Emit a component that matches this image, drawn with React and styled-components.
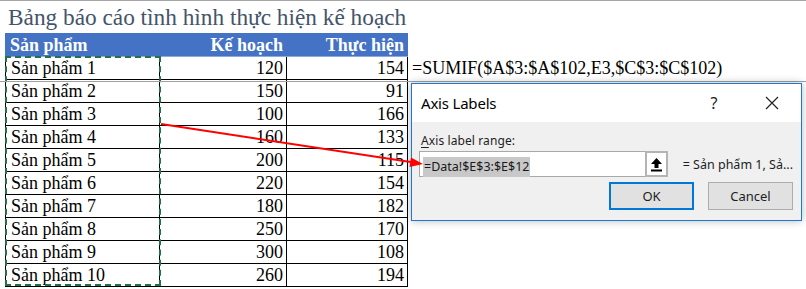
import React from 'react';
import styled, { createGlobalStyle } from 'styled-components';

const GlobalStyle = createGlobalStyle`
  html, body {
    margin: 0;
    padding: 0;
    background: #ffffff;
  }
  * {
    box-sizing: border-box;
  }
`;

const Page = styled.div`
  position: relative;
  width: 806px;
  height: 289px;
  overflow: hidden;
  border-top: 1px solid #a6a6a6;
  background: #ffffff;
  font-family: "Liberation Serif", "Times New Roman", serif;
`;

const Title = styled.div`
  height: 32px;
  padding-left: 8px;
  font-size: 23.3px;
  line-height: 32px;
  color: #44546a;
  white-space: nowrap;
`;

const Sheet = styled.div`
  margin-left: 5px;
`;

const Grid = styled.div`
  display: grid;
  grid-template-columns: 155px 127px 121px auto;
`;

const HeadCell = styled.div`
  height: 24px;
  padding: 0 ${p => (p.$right ? '4px' : '5px')};
  background: #4472c4;
  border-bottom: 1px solid #8ea9db;
  color: #ffffff;
  font-weight: bold;
  font-size: 18px;
  line-height: 24px;
  text-align: ${p => (p.$right ? 'right' : 'left')};
  white-space: nowrap;
`;

const Body = styled.div`
  position: relative;
`;

const Cell = styled.div`
  height: 23px;
  padding: 0 ${p => (p.$right ? '3px' : '5px')};
  border-bottom: 1px solid #000000;
  border-right: 1px solid #000000;
  border-left: ${p => (p.$first ? '1px solid #000000' : 'none')};
  font-size: 18px;
  line-height: 23px;
  color: #000000;
  text-align: ${p => (p.$right ? 'right' : 'left')};
  white-space: nowrap;
`;

const Overflow = styled.div`
  height: 23px;
  padding-left: 4px;
  font-size: 18px;
  line-height: 23px;
  color: #000000;
  white-space: nowrap;
`;

const Marquee = styled.div`
  position: absolute;
  left: 0;
  top: -1px;
  width: 156px;
  bottom: 1px;
  border: 2px dashed #217346;
  pointer-events: none;
`;

const RowRule = styled.div`
  position: absolute;
  left: 0;
  right: 0;
  top: 80px;
  height: 1px;
  background: #a0a0a0;
`;

const Dialog = styled.div`
  position: absolute;
  left: 411px;
  top: 82px;
  width: 391px;
  height: 138px;
  display: flex;
  flex-direction: column;
  border: 1px solid #1a7ad4;
  background: #f0f0f0;
  box-shadow: 0 0 8px rgba(0, 0, 0, 0.28);
  font-family: "Noto Sans", "Open Sans", sans-serif;
  color: #000000;
`;

const TitleBar = styled.div`
  height: 38px;
  display: flex;
  align-items: center;
  background: #ffffff;
  padding-left: 9px;
  padding-right: 14px;
`;

const DialogTitle = styled.div`
  flex: 1;
  font-size: 15px;
  letter-spacing: -0.2px;
`;

const TitleButton = styled.div`
  width: ${p => p.$w}px;
  margin-right: ${p => p.$gap || 0}px;
  display: flex;
  justify-content: center;
  font-size: 16px;
  color: #222222;
`;

const DialogBody = styled.div`
  flex: 1;
  padding: 9px 8px 0 7px;
  display: flex;
  flex-direction: column;
`;

const FieldLabel = styled.div`
  height: 19px;
  padding-left: 2px;
  font-size: 12px;
  line-height: 19px;
  letter-spacing: 0.1px;
  color: #1e1e1e;

  u {
    text-decoration: underline;
    text-underline-offset: 2px;
  }
`;

const FieldRow = styled.div`
  margin-top: 1px;
  height: 26px;
  display: flex;
  align-items: center;
`;

const Input = styled.div`
  width: 226px;
  height: 26px;
  padding: 2px 3px;
  background: #ffffff;
  border: 1px solid #a9a9a9;
  border-right: none;
`;

const Selected = styled.span`
  display: inline-block;
  height: 20px;
  padding: 0 1px;
  background: #c8c8c8;
  font-size: 12.5px;
  line-height: 20px;
  color: #1a1a1a;
`;

const Collapse = styled.div`
  width: 23px;
  height: 26px;
  display: flex;
  align-items: center;
  justify-content: center;
  background: #ffffff;
  border: 2px solid #b4b4b4;
`;

const Preview = styled.div`
  margin-left: 15px;
  font-size: 12.5px;
  color: #1e1e1e;
  white-space: nowrap;
`;

const Buttons = styled.div`
  margin-top: 5px;
  display: flex;
  justify-content: flex-end;
  gap: 14px;
`;

const Button = styled.div`
  width: ${p => p.$w}px;
  height: 28px;
  display: flex;
  align-items: center;
  justify-content: center;
  background: #e1e1e1;
  border: ${p => (p.$primary ? '2px solid #0078d7' : '1px solid #adadad')};
  font-size: 13px;
  color: #1e1e1e;
`;

const Arrow = styled.svg`
  position: absolute;
  left: 0;
  top: 0;
  width: 806px;
  height: 289px;
  pointer-events: none;
`;

const rows = [
  ['Sản phẩm 1', 120, 154],
  ['Sản phẩm 2', 150, 91],
  ['Sản phẩm 3', 100, 166],
  ['Sản phẩm 4', 160, 133],
  ['Sản phẩm 5', 200, 115],
  ['Sản phẩm 6', 220, 154],
  ['Sản phẩm 7', 180, 182],
  ['Sản phẩm 8', 250, 170],
  ['Sản phẩm 9', 300, 108],
  ['Sản phẩm 10', 260, 194],
];

const UploadIcon = () => (
  <svg width="13" height="15" viewBox="0 0 13 15">
    <path d="M6.5 1 L12 7 H8.5 V11 H4.5 V7 H1 Z" fill="#000" />
    <rect x="1" y="12.5" width="11" height="2" fill="#000" />
  </svg>
);

export default function App() {
  return (
    <Page>
      <GlobalStyle />
      <Title>Bảng báo cáo tình hình thực hiện kế hoạch</Title>
      <Sheet>
        <Grid>
          <HeadCell>Sản phẩm</HeadCell>
          <HeadCell $right>Kế hoạch</HeadCell>
          <HeadCell $right>Thực hiện</HeadCell>
          <div />
        </Grid>
        <Body>
          <Grid>
            {rows.map(([name, plan, done], i) => (
              <React.Fragment key={name}>
                <Cell $first>{name}</Cell>
                <Cell $right>{plan}</Cell>
                <Cell $right>{done}</Cell>
                {i === 0 ? (
                  <Overflow>=SUMIF($A$3:$A$102,E3,$C$3:$C$102)</Overflow>
                ) : (
                  <div />
                )}
              </React.Fragment>
            ))}
          </Grid>
          <Marquee />
        </Body>
      </Sheet>

      <RowRule />

      <Dialog>
        <TitleBar>
          <DialogTitle>Axis Labels</DialogTitle>
          <TitleButton $w={34} $gap={26}>?</TitleButton>
          <TitleButton $w={30}>
            <svg width="14" height="14" viewBox="0 0 14 14">
              <path d="M1 1 L13 13 M13 1 L1 13" stroke="#222" strokeWidth="1.2" />
            </svg>
          </TitleButton>
        </TitleBar>
        <DialogBody>
          <FieldLabel>
            <u>A</u>xis label range:
          </FieldLabel>
          <FieldRow>
            <Input>
              <Selected>=Data!$E$3:$E$12</Selected>
            </Input>
            <Collapse>
              <UploadIcon />
            </Collapse>
            <Preview>= Sản phẩm 1, Sả...</Preview>
          </FieldRow>
          <Buttons>
            <Button $primary $w={85}>OK</Button>
            <Button $w={85}>Cancel</Button>
          </Buttons>
        </DialogBody>
      </Dialog>

      <Arrow viewBox="0 0 806 289">
        <line x1="161" y1="123" x2="414" y2="161.5" stroke="#ff0000" strokeWidth="2" />
        <path d="M423 163 L411 156.5 L409.5 166 Z" fill="#ff0000" />
      </Arrow>
    </Page>
  );
}
